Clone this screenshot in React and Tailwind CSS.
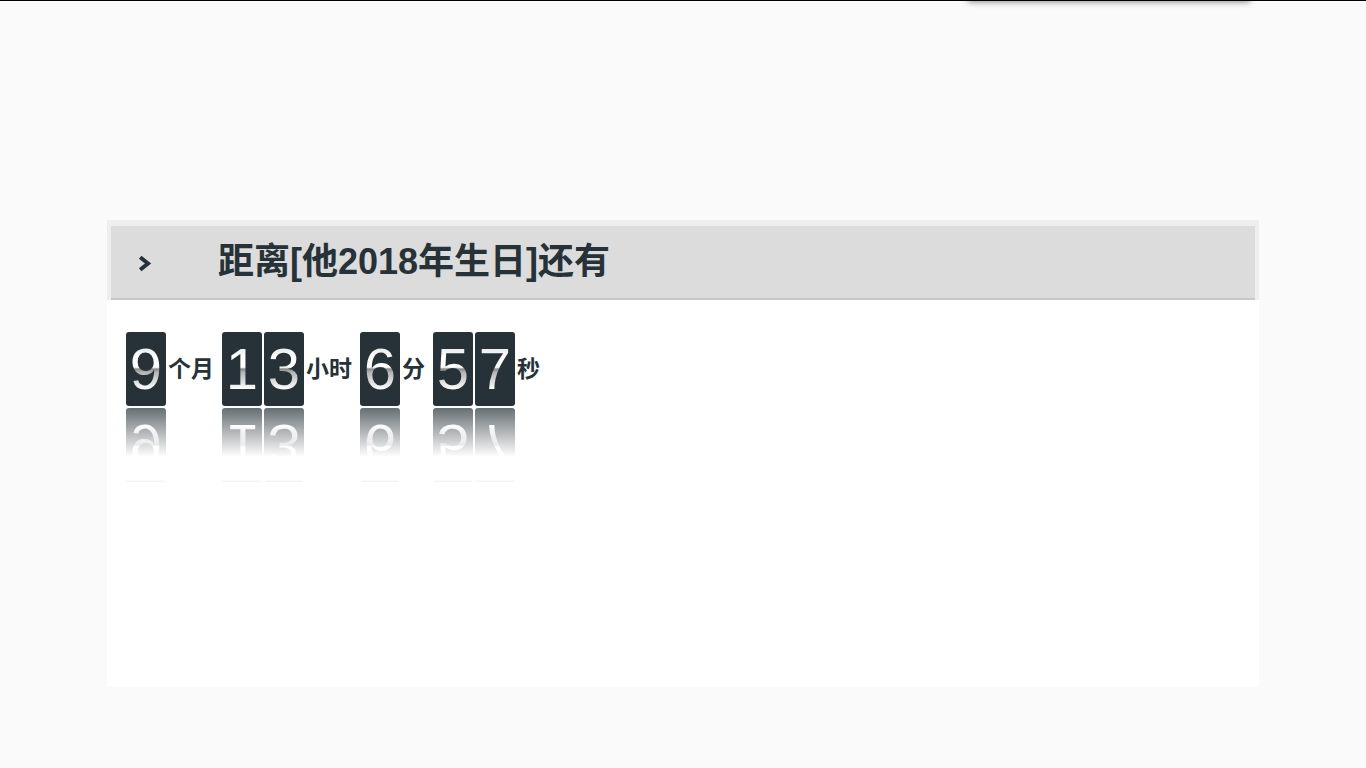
import React from 'react';

const groups = [
  { digits: '9', label: '个月' },
  { digits: '13', label: '小时' },
  { digits: '6', label: '分' },
  { digits: '57', label: '秒' },
];

function FlipCard({ value }) {
  return (
    <div className="w-[40px] h-[74px] rounded-[3px] bg-[#263238] flex items-center justify-center [-webkit-box-reflect:below_2px_linear-gradient(rgba(255,255,255,0.08)_0%,transparent_3%,transparent_34%,rgba(255,255,255,0.7)_100%)]">
      <span className="font-['Liberation_Sans',Arial,sans-serif] text-[58px] leading-none bg-[linear-gradient(to_bottom,#d9d9d9_0%,#ffffff_30%,#ffffff_47%,#8a8a8a_50%,#b5b5b5_56%,#ffffff_85%,#ffffff_100%)] bg-clip-text text-transparent">
        {value}
      </span>
    </div>
  );
}

export default function App() {
  return (
    <div className="relative min-h-screen overflow-hidden bg-[#fafafa] border-t border-black">
      {/* menu peeking from above the top edge */}
      <div className="absolute -top-[30px] left-[968px] w-[282px] h-[30px] bg-white shadow-[0_1px_6px_rgba(0,0,0,0.45)]" />

      <div className="pt-[219px]">
        <div className="mx-auto w-[1152px]">
          <div className="bg-[#eeeeee] pt-[6px] px-[4px]">
            <div className="h-[74px] bg-[#dcdcdc] border-b-2 border-[#c8c8c8] flex items-center pl-[26px]">
              <svg width="15" height="17" viewBox="0 0 15 17" className="shrink-0 mt-[2px]">
                <polyline points="3.2,2.2 11,8.5 3.2,14.8" fill="none" stroke="#263238" strokeWidth="4" strokeLinejoin="miter" />
              </svg>
              <h2 className="ml-[66px] font-['Liberation_Sans','Noto_Sans_CJK_SC',sans-serif] font-bold text-[36px] leading-none text-[#263238]">
                距离[他2018年生日]还有
              </h2>
            </div>
          </div>

          <div className="bg-white h-[387px] pt-[32px] pl-[19px]">
            <div className="flex items-center">
              {groups.map((g) => (
                <div key={g.label} className="flex items-center mr-[8px]">
                  <div className="flex gap-[2px]">
                    {g.digits.split('').map((d, i) => (
                      <FlipCard key={i} value={d} />
                    ))}
                  </div>
                  <span className="ml-[2px] font-['Liberation_Sans','Noto_Sans_CJK_SC',sans-serif] font-bold text-[23px] leading-none text-[#263238]">
                    {g.label}
                  </span>
                </div>
              ))}
            </div>
          </div>
        </div>
      </div>
    </div>
  );
}
